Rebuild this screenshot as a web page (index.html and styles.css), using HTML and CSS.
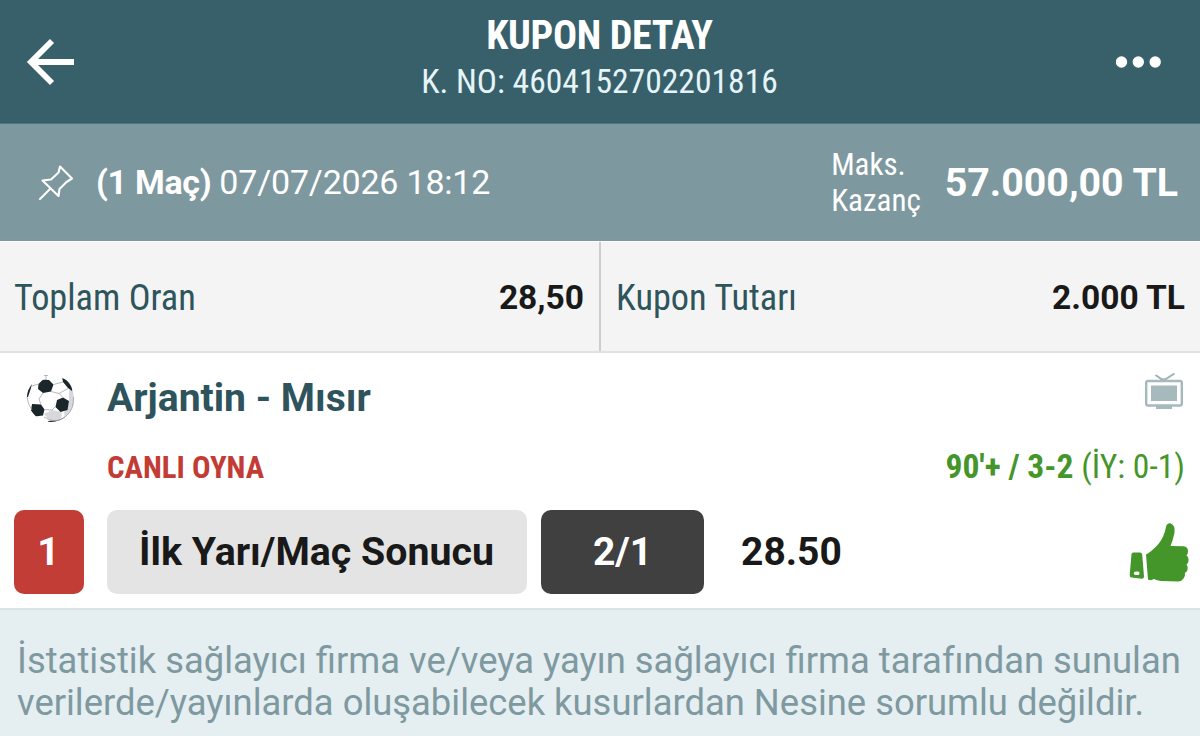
FILE: index.html
```html
<!DOCTYPE html>
<html lang="tr">
<head>
<meta charset="utf-8">
<title>Kupon Detay</title>
<link rel="stylesheet" href="styles.css">
</head>
<body>
<header class="topbar">
  <svg class="back" width="50" height="50" viewBox="0 0 50 50"><path d="M27 4 6 25l21 21M6 25h43" fill="none" stroke="#fff" stroke-width="5.800"/></svg>
  <div class="heading">
    <h1 class="title cond">KUPON DETAY</h1>
    <div class="number cond">K. NO: 4604152702201816</div>
  </div>
  <svg class="more" width="46" height="12" viewBox="0 0 46 12" fill="#fff"><circle cx="5.500" cy="6" r="5.700"/><circle cx="22.300" cy="6" r="5.700"/><circle cx="39.200" cy="6" r="5.700"/></svg>
</header>
<section class="summary">
  <svg class="pin" width="36" height="36" viewBox="0 0 36 36" fill="none" stroke="#fff" stroke-width="2.100" stroke-linejoin="round" stroke-linecap="round"><path d="M22 1.500 34 13.500 28.500 17 21.500 24 20.500 31 4.500 15.500 13 14.500 20.500 7.500ZM12.500 23.500 2 34"/></svg>
  <span class="count">(1 Maç)</span>
  <span class="date">07/07/2026 18:12</span>
  <div class="max-label cond"><span>Maks.</span><br><span>Kazanç</span></div>
  <span class="max-value">57.000,00 TL</span>
</section>
<section class="totals">
  <div class="total"><span class="total-label cond">Toplam Oran</span><b class="odds-total">28,50</b></div>
  <div class="total"><span class="total-label cond">Kupon Tutarı</span><b class="stake">2.000 TL</b></div>
</section>
<main class="match">
  <div class="row teams-row">
    <svg class="ball" width="50" height="50" viewBox="0 0 50 50">
      <defs><clipPath id="ball-edge"><path d="M13 8 20 6l8 2 8-3q5 1 9 8 3 6 3 13 0 10-7 16.500T25 49q-9 0-16-6.500T1 27q-.5-8 3-13l2-3Z"/></clipPath></defs>
      <g clip-path="url(#ball-edge)"><path fill="#fff" d="M0 0h50v50H0z"/><path fill="#d8d7dc" d="m43 17 3-1 4 4v18L39 46l-1-7 5-10ZM18 41l8-4 9 2 1 4-3 5H24Z"/>
      <g fill="#1b262b"><path d="m12.500 11 4.500-4.500 6 .5 4.500 4.500-2.500 7-8 1.500-5-4ZM36 4h6l5 10-1 4-4-3-5-6ZM31 27l6-2.500 6 3.500-1.500 9-7 2-5-5ZM6 31l9 .5 3.500 5-1.500 6-8 1-4-6ZM1 24v-9l5-4-1 4-3 9Z"/><path d="m22 48 10-.5 8-4-2 6H22Z"/></g></g>
      <g fill="none" stroke="#97999b" stroke-width=".7"><path d="m17 20-4 6 2 5.500M25 18.500l8 2 4 4M33 20.500l9-5M30 33l-4 4-7.500-.5M27.500 11.500 37 9M6 13l6.500-2M20 2v5m-2-4.500h4M1 24q1 8 5 13m12 7q12 8 22-1 8-6 7.500-19"/></g>
    </svg>
    <h2 class="teams">Arjantin - Mısır</h2>
    <svg class="tv" width="38" height="38" viewBox="0 0 38 38"><path d="m10.500 2 8 5.500 11-7" fill="none" stroke="#9fb3b7" stroke-width="2"/><path d="M15 5h7v4h-7z" fill="#9fb3b7" opacity=".6"/><rect x="1.200" y="8" width="35.600" height="24.500" rx="1.800" fill="#fff" stroke="#a6b9bd" stroke-width="2.400"/><path d="M6 12.500h26v15.500H6zM11 33h16v3H11z" fill="#a6b9bd"/></svg>
  </div>
  <div class="row status-row">
    <span class="live cond">CANLI OYNA</span>
    <span class="score cond"><b>90'+ / 3-2</b> <span class="half">(İY: 0-1)</span></span>
  </div>
  <div class="row bet-row">
    <span class="chip mbs">1</span>
    <span class="chip market">İlk Yarı/Maç Sonucu</span>
    <span class="chip pick">2/1</span>
    <b class="odd">28.50</b>
    <svg class="thumb" width="60" height="60" viewBox="0 0 60 60" fill="#45962a"><path d="M17 32.500Q22 30 29 22.500q6-7 8-17.500.8-4 4.300-3.700 5.200 1.700 4.200 9.700Q44 18 41.500 24l13 .3q4.500.7 4.500 4.700 0 3-1.500 4.500 2.500 2 2 5.500-.3 2.500-2 3.500 2 2.500 1 5.500-.7 2-2.500 2.800.5 3-1.500 5.700-1.500 2.500-5 3L32 59q-4-.5-7-2-3 2-6 .5Z"/><path fill-rule="evenodd" d="M4.500 30.500H11q2 0 2.200 2L15 54.500q0 2.200-2 2.200L2.500 55.500Q.5 55 .7 53L2.500 32q.2-1.500 2-1.500ZM5.500 49.800q-1.500 1.500 0 3 2.500.6 4.500 0 1.200-1.500 0-3-2-.6-4.500 0Z"/></svg>
  </div>
</main>
<footer class="notice"><span class="line1" lang="en">İstatistik sağlayıcı firma ve/veya yayın sağlayıcı firma tarafından sunulan</span><br><span class="line2">verilerde/yayınlarda oluşabilecek kusurlardan Nesine sorumlu değildir.</span></footer>
</body>
</html>
```
FILE: styles.css
```css
* { box-sizing: border-box; }
body { margin: 0; width: 1200px; height: 736px; overflow: hidden; background: #fff; font-family: Roboto, "Liberation Sans", sans-serif; color: #191919; display: flex; flex-direction: column; }
h1, h2 { margin: 0; }
svg { display: block; flex: none; }
span, b, h2 { white-space: nowrap; }
.cond { font-family: "Roboto Condensed", Roboto, sans-serif; font-stretch: 75%; }
.topbar { height: 124px; flex: none; background: #38606a; display: grid; grid-template-columns: 1fr auto 1fr; padding: 0 38px 0 25px; border-bottom: 1px solid #527780; }
.back { margin-top: 37px; }
.heading { text-align: center; color: #fff; padding: 13px 0 0 12px; }
.title { font-size: 40px; line-height: 46px; font-weight: 700; letter-spacing: -0.35px; }
.number { font-size: 33.6px; line-height: 46px; color: #e4f4f8; }
.more { justify-self: end; margin-top: 56px; }
.summary { height: 117px; flex: none; background: #7e989f; color: #fff; display: flex; align-items: center; padding: 0 23px 0 38px; }
.count { font-size: 34px; font-weight: 700; margin: -2px 0 0 22px; letter-spacing: -0.3px; }
.date { font-size: 34px; margin: -2px 0 0 8px; letter-spacing: -0.2px; }
.max-label { margin-left: auto; font-size: 31px; line-height: 36px; }
.max-value { font-size: 39.3px; font-weight: 700; margin-left: 24px; margin-right: -1px; }
.totals { height: 112px; flex: none; display: grid; grid-template-columns: 601px 1fr; background: #f4f4f4; border-top: 1px solid #fff; border-bottom: 2px solid #e1e1e1; }
.total { display: flex; align-items: center; justify-content: space-between; padding: 0 15px; }
.total:first-child { border-right: 2px solid #cdcdcd; }
.total-label { font-size: 36.3px; color: #2e545c; margin-left: -1px; margin-top: 1px; }
.total:last-child .total-label { margin-left: 0; }
.total b { font-size: 33.500px; margin-top: 2px; }
.match { height: 255px; flex: none; display: flex; flex-direction: column; }
.row { display: flex; align-items: center; }
.teams-row { height: 90px; padding: 0 17px 0 25px; }
.ball { margin: 0 0 0 1px; }
.teams { font-size: 39.1px; color: #2f535c; margin-left: 31px; margin-top: -1px; }
.tv { margin: -13px 0 0 auto; }
.status-row { height: 50px; padding: 0 15px 3px 107px; justify-content: space-between; }
.live { font-size: 30.8px; font-weight: 700; color: #c23c35; margin-top: 2px; }
.score { font-size: 33.6px; color: #45962a; }
.bet-row { height: 84px; margin-top: 17px; padding: 0 11px 0 14px; }
.chip { height: 84px; border-radius: 10px; display: flex; align-items: center; justify-content: center; font-size: 39px; font-weight: 700; flex: none; }
.mbs { width: 70px; background: #c33d37; color: #fff; padding-right: 1px; }
.market { width: 420px; margin-left: 23px; background: #e4e4e4; font-size: 39.3px; padding-right: 1px; }
.pick { width: 163px; margin-left: 14px; background: #404040; color: #fff; }
.odd { font-size: 39px; margin-left: 37px; }
.thumb { margin-left: auto; margin-top: -1px; }
.notice { flex: 1; background: #e5eef1; border-top: 2px solid #d8e3e6; padding: 30px 17px 0; font-size: 36.4px; line-height: 42px; color: #7e999f; }
```
